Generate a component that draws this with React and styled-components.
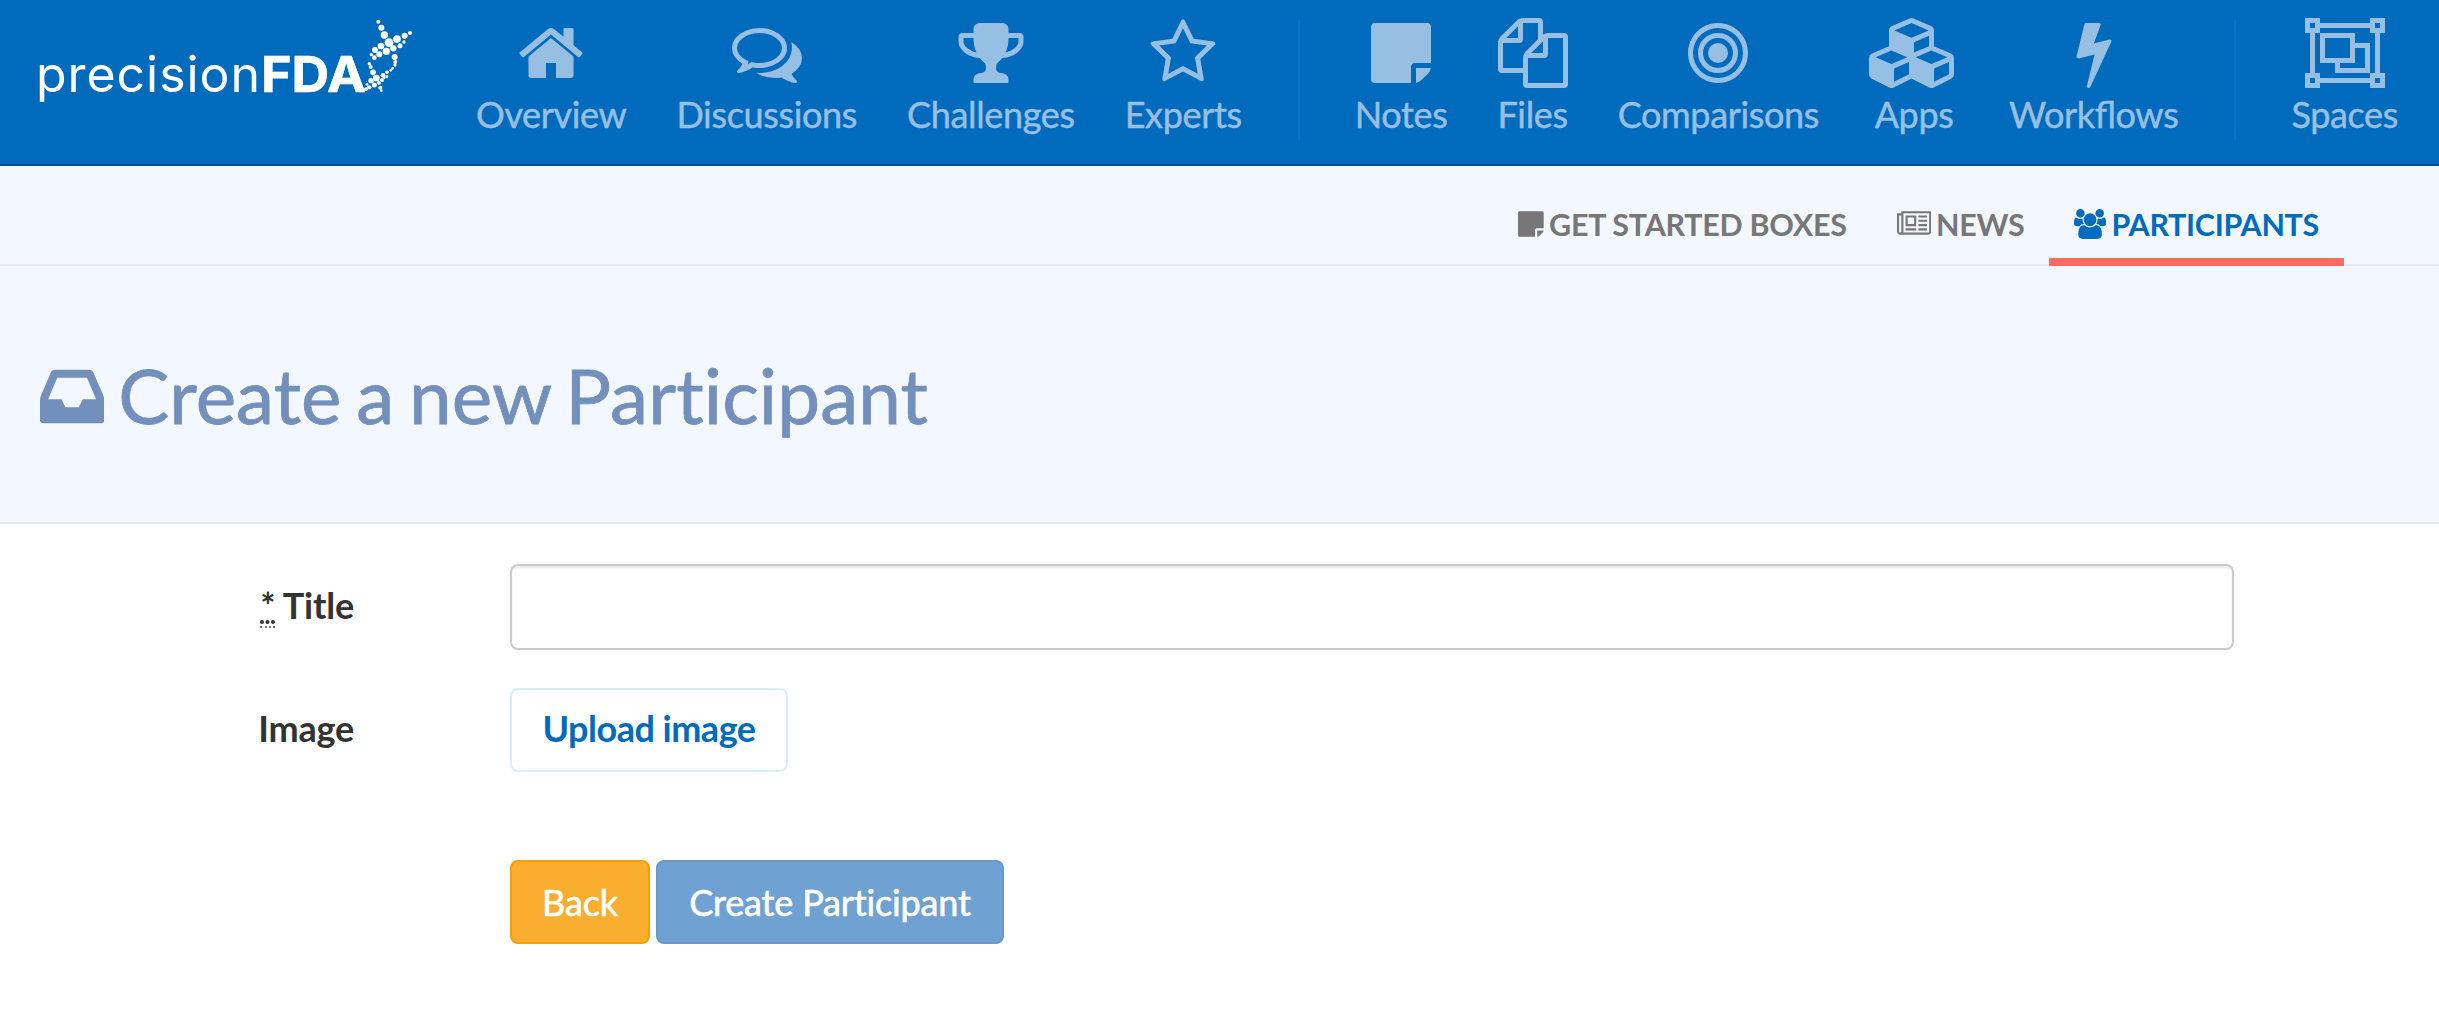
import React from "react";
import styled, { createGlobalStyle } from "styled-components";

const GlobalStyle = createGlobalStyle`
  *, *::before, *::after { box-sizing: border-box; }
  body {
    margin: 0;
    background: #fff;
    color: #333;
    font-family: Lato, "Liberation Sans", sans-serif;
    font-size: 35px;
  }
`;

const Header = styled.header`
  display: flex;
  height: 166px;
  padding-left: 38px;
  background: #006bbc;
  border-bottom: 2px solid #00508c;
`;

const Logo = styled.a`
  flex: none;
  width: 413px;
  height: 120px;
`;

const LogoSvg = styled.svg`
  display: block;
  width: 380px;
  height: 120px;
  fill: #fff;
  overflow: visible;
`;

const LogoLight = styled.text`
  font-family: Inter, sans-serif;
  font-size: 50px;
  font-weight: 400;
`;

const LogoBold = styled.text`
  font-family: Inter, sans-serif;
  font-size: 50px;
  font-weight: 700;
  stroke: #fff;
  stroke-width: 0.6px;
`;

const MainNav = styled.nav`
  display: flex;
`;

const MainLink = styled.a`
  display: flex;
  flex-direction: column;
  align-items: center;
  padding: 18px 25px 0;
  color: #97bfe3;
  font-size: 36px;
  letter-spacing: -0.35px;
  font-feature-settings: "liga" 1;
  -webkit-text-stroke: 0.5px currentColor;
  line-height: 52px;
  white-space: nowrap;
`;

const NavDivider = styled.span`
  width: 2px;
  height: 120px;
  margin: 20px 30px 0 31px;
  background: #0077d2;
`;

const Glyph = styled.svg`
  display: block;
  flex: none;
  width: ${(p) => (p.$size * p.$units) / 1792}px;
  height: ${(p) => p.$size}px;
  fill: currentColor;
`;

const SubNav = styled.nav`
  display: flex;
  justify-content: flex-end;
  height: 100px;
  padding-right: 95px;
  background: #f3f7ff;
  box-shadow: inset 0 -2px 0 #e1ebfa;
`;

const SubLink = styled.a`
  display: flex;
  align-items: center;
  gap: 5px;
  padding: 23px 25px 0;
  border-bottom: 8px solid ${(p) => (p.$active ? "#fb6b63" : "transparent")};
  color: ${(p) => (p.$active ? "#006bbc" : "#777")};
  font-size: 30.5px;
  font-weight: 700;
  letter-spacing: -0.3px;
  line-height: 42px;
  white-space: nowrap;
`;

const TitleBand = styled.section`
  display: flex;
  align-items: flex-start;
  gap: 14px;
  height: 258px;
  padding: 93px 40px 0;
  background: #f3f7ff;
  border-bottom: 2px solid #e1ebfa;
  color: #738fbc;
`;

const PageTitle = styled.h1`
  margin: -10.5px 0 0;
  font-size: 76.5px;
  font-weight: 400;
  line-height: 90px;
  letter-spacing: 0.1px;
  word-spacing: -5px;
  font-variant-ligatures: none;
  -webkit-text-stroke: 0.8px currentColor;
`;

const Form = styled.form`
  display: flex;
  flex-direction: column;
  padding: 40px 205px 0 0;
`;

const Row = styled.div`
  display: grid;
  grid-template-columns: 354px 1fr;
  column-gap: 156px;
  align-items: center;
  margin-bottom: ${(p) => p.$gap}px;
`;

const Label = styled.label`
  padding-bottom: 4px;
  text-align: right;
  font-size: 36px;
  font-weight: 700;
  letter-spacing: -0.2px;
  line-height: 50px;
`;

const Required = styled.abbr`
  display: inline-block;
  line-height: 42px;
  border-bottom: 2px dotted #777;
  text-decoration: underline dotted 4px;
  text-underline-offset: 1px;
`;

const TextInput = styled.input`
  width: 100%;
  height: 86px;
  padding: 12px 24px;
  border: 2px solid #ccc;
  border-radius: 8px;
  background: #fff;
  box-shadow: inset 0 2px 2px rgba(0, 0, 0, 0.075);
  font: inherit;
`;

const Actions = styled.div`
  display: flex;
  gap: 6px;
  grid-column: 2;
`;

const tones = {
  outline: { bg: "#fff", line: "#d6edfe", text: "#006bbc", weight: 700, stroke: 0, drop: 4 },
  warning: { bg: "#f9ae2f", line: "#fa9f00", text: "#fff", weight: 400, stroke: 0.6, drop: 0 },
  primary: { bg: "#6fa2d3", line: "#6899c8", text: "#fff", weight: 400, stroke: 0.6, drop: 0 },
};

const Button = styled.button`
  height: 84px;
  width: ${(p) => p.$width}px;
  padding: 0 0 ${(p) => tones[p.$tone].drop}px;
  border: 2px solid ${(p) => tones[p.$tone].line};
  border-radius: 8px;
  background: ${(p) => tones[p.$tone].bg};
  color: ${(p) => tones[p.$tone].text};
  font-family: inherit;
  font-size: 36px;
  font-weight: ${(p) => tones[p.$tone].weight};
  letter-spacing: ${(p) => (p.$tone === "outline" ? -0.5 : -0.15)}px;
  line-height: 50px;
  font-variant-ligatures: none;
  -webkit-text-stroke: ${(p) => tones[p.$tone].stroke}px currentColor;
  white-space: nowrap;
`;

const ICONS = {
  home: [1792, "M1472 992v480q0 26-19 45t-45 19h-384v-384h-256v384h-384q-26 0-45-19t-19-45v-480q0-1 .5-3t.5-3l575-474 575 474q1 2 1 6zm223-69l-62 74q-8 9-21 11h-3q-13 0-21-7l-692-577-692 577q-12 8-24 7-13-2-21-11l-62-74q-8-10-7-23.5t11-21.5l719-599q32-26 76-26t76 26l244 204v-195q0-14 9-23t23-9h192q14 0 23 9t9 23v408l219 182q10 8 11 21.5t-7 23.5z"],
  comments: [1792, "M704 384q-153 0-286 52t-211.5 141-78.5 191q0 82 53 158t149 132l97 56-35 84q34-20 62-39l44-31 53 10q78 14 153 14 153 0 286-52t211.5-141 78.5-191-78.5-191-211.5-141-286-52zm0-128q191 0 353.5 68.5t256.5 186.5 94 257-94 257-256.5 186.5-353.5 68.5q-86 0-176-16-124 88-278 128-36 9-86 16h-3q-11 0-20.5-8t-11.5-21q-1-3-1-6.5t.5-6.5 2-6l2.5-5 3.5-5.5 4-5 4.5-5 4-4.5q5-6 23-25t26-29.5 22.5-29 25-38.5 20.5-44q-124-72-195-177t-71-224q0-139 94-257t256.5-186.5 353.5-68.5zm822 1169q10 24 20.5 44t25 38.5 22.5 29 26 29.5 23 25q1 1 4 4.5t4.5 5 4 5 3.5 5.5l2.5 5 2 6 .5 6.5-1 6.5q-3 14-13 22t-22 7q-50-7-86-16-154-40-278-128-90 16-176 16-271 0-472-132 58 4 88 4 161 0 309-45t264-129q125-92 192-212t67-254q0-77-23-152 129 71 204 178t75 230q0 120-71 224.5t-195 176.5z"],
  trophy: [1792, "M522 883q-74-162-74-371h-256v96q0 78 94.5 162t235.5 113zm1078-275v-96h-256q0 209-74 371 141-29 235.5-113t94.5-162zm128-128v128q0 71-41.5 143t-112 130-173 97.5-215.5 44.5q-42 54-95 95-38 34-52.5 72.5t-14.5 89.5q0 54 30.5 91t97.5 37q75 0 133.5 45.5t58.5 114.5v64q0 14-9 23t-23 9h-832q-14 0-23-9t-9-23v-64q0-69 58.5-114.5t133.5-45.5q67 0 97.5-37t30.5-91q0-51-14.5-89.5t-52.5-72.5q-53-41-95-95-113-5-215.5-44.5t-173-97.5-112-130-41.5-143v-128q0-40 28-68t68-28h288v-96q0-66 47-113t113-47h576q66 0 113 47t47 113v96h288q40 0 68 28t28 68z"],
  star: [1792, "M1201 1004l306-297-422-62-189-382-189 382-422 62 306 297-73 421 378-199 377 199zm527-357q0 22-26 48l-363 354 86 500q1 7 1 20 0 50-41 50-19 0-40-12l-449-236-449 236q-22 12-40 12-21 0-31.5-14.5t-10.5-35.5q0-6 2-20l86-500-364-354q-25-27-25-48 0-37 56-46l502-73 225-455q19-41 49-41t49 41l225 455 502 73q56 9 56 46z"],
  note: [1536, "M1024 1248v416h-928q-40 0-68-28t-28-68v-1344q0-40 28-68t68-28h1344q40 0 68 28t28 68v928h-416q-40 0-68 28t-28 68zm128 32h381q-15 82-65 132l-184 184q-50 50-132 65v-381z"],
  files: [1792, "M1696 384q40 0 68 28t28 68v1216q0 40-28 68t-68 28h-960q-40 0-68-28t-28-68v-288h-544q-40 0-68-28t-28-68v-672q0-40 20-88t48-76l408-408q28-28 76-48t88-20h416q40 0 68 28t28 68v328q68-40 128-40h416zm-544 213l-299 299h299v-299zm-640-384l-299 299h299v-299zm196 647l316-316v-416h-384v416q0 40-28 68t-68 28h-416v640h512v-256q0-40 20-88t48-76zm956 804v-1152h-384v416q0 40-28 68t-68 28h-416v640h896z"],
  bullseye: [1792, "M1152 896q0 106-75 181t-181 75-181-75-75-181 75-181 181-75 181 75 75 181zm128 0q0-159-112.5-271.5t-271.5-112.5-271.5 112.5-112.5 271.5 112.5 271.5 271.5 112.5 271.5-112.5 112.5-271.5zm128 0q0 212-150 362t-362 150-362-150-150-362 150-362 362-150 362 150 150 362zm128 0q0-130-51-248.5t-136.5-204-204-136.5-248.5-51-248.5 51-204 136.5-136.5 204-51 248.5 51 248.5 136.5 204 204 136.5 248.5 51 248.5-51 204-136.5 136.5-204 51-248.5zm128 0q0 209-103 385.5t-279.5 279.5-385.5 103-385.5-103-279.5-279.5-103-385.5 103-385.5 279.5-279.5 385.5-103 385.5 103 279.5 279.5 103 385.5z"],
  cubes: [2304, "M640 1632l384-192v-314l-384 164v342zm-64-454l404-173-404-173-404 173zm1088 454l384-192v-314l-384 164v342zm-64-454l404-173-404-173-404 173zm-448-293l384-165v-266l-384 164v267zm-64-379l441-189-441-189-441 189zm1088 518v416q0 36-19 67t-52 47l-448 224q-25 14-57 14t-57-14l-448-224q-4-2-7-4-2 2-7 4l-448 224q-25 14-57 14t-57-14l-448-224q-33-16-52-47t-19-67v-416q0-38 21.5-70t56.5-48l434-186v-400q0-38 21.5-70t56.5-48l448-192q23-10 50-10t50 10l448 192q35 16 56.5 48t21.5 70v400l434 186q36 16 57 48t21 70z"],
  bolt: [1792, "M1333 566q18 20 7 44l-540 1157q-13 25-42 25-4 0-14-2-17-5-25.5-19t-4.5-30l197-808-406 101q-4 1-12 1-18 0-31-11-18-15-13-39l201-825q4-14 16-23t28-9h328q19 0 32 12.5t13 29.5q0 8-5 18l-171 463 396-98q8-2 12-2 19 0 34 15z"],
  group: [2048, "M2048 384h-128v1024h128v384h-384v-128h-1280v128h-384v-384h128v-1024h-128v-384h384v128h1280v-128h384zM1792 128v128h128v-128zM128 128v128h128v-128zM256 1664v-128h-128v128zM1920 1664v-128h-128v128zM1664 1536v-128h128v-1024h-128v-128h-1280v128h-128v1024h128v128zM1280 640h384v768h-896v-256h-384v-768h896zM512 1024h640v-512h-640zM1536 1280v-512h-256v384h-384v128z"],
  news: [2048, "M1024 512h-384v384h384v-384zm128 640v128h-640v-128h640zm0-768v640h-640v-640h640zm640 768v128h-512v-128h512zm0-256v128h-512v-128h512zm0-256v128h-512v-128h512zm0-256v128h-512v-128h512zm-1536 960v-960h-128v960q0 26 19 45t45 19 45-19 19-45zm1664 0v-1088h-1536v1088q0 33-11 64h1483q26 0 45-19t19-45zm128-1216v1216q0 80-56 136t-136 56h-1664q-80 0-136-56t-56-136v-1088h256v-128h1792z"],
  users: [1920, "M593 896q-162 5-265 128h-134q-82 0-138-40.5t-56-118.5q0-353 124-353 6 0 43.5 21t97.5 42.5 119 21.5q67 0 133-23-5 37-5 66 0 139 81 256zm1071 637q0 120-73 189.5t-194 69.5h-874q-121 0-194-69.5t-73-189.5q0-53 3.5-103.5t14-109 26.5-108.5 43-97.5 62-81 85.5-53.5 111.5-20q10 0 43 21.5t73 48 107 48 135 21.5 135-21.5 107-48 73-48 43-21.5q61 0 111.5 20t85.5 53.5 62 81 43 97.5 26.5 108.5 14 109 3.5 103.5zm-1024-1277q0 106-75 181t-181 75-181-75-75-181 75-181 181-75 181 75 75 181zm704 384q0 159-112.5 271.5t-271.5 112.5-271.5-112.5-112.5-271.5 112.5-271.5 271.5-112.5 271.5 112.5 112.5 271.5zm576 225q0 78-56 118.5t-138 40.5h-134q-103-123-265-128 81-117 81-256 0-29-5-66 66 23 133 23 59 0 119-21.5t97.5-42.5 43.5-21q124 0 124 353zm-128-609q0 106-75 181t-181 75-181-75-75-181 75-181 181-75 181 75 75 181z"],
  inbox: [1536, "M1023 960h316q-1-3-2.5-8t-2.5-8l-212-496h-708l-212 496q-1 2-2.5 8t-2.5 8h316l95 192h320zm513 30v482q0 26-19 45t-45 19h-1408q-26 0-45-19t-19-45v-482q0-62 25-123l238-552q10-25 36.5-42t52.5-17h832q26 0 52.5 17t36.5 42l238 552q25 61 25 123z"],
};

function Icon({ name, size }) {
  const [units, path] = ICONS[name];
  return (
    <Glyph $size={size} $units={units} viewBox={`0 0 ${units} 1792`} aria-hidden="true">
      <path d={path} fillRule={name === "group" ? "evenodd" : "nonzero"} />
    </Glyph>
  );
}

// Helix dots beside the wordmark: [cx, cy, r].
const HELIX = [
  [70, 20, 6], [79, 38, 9], [88, 60, 11], [102, 83, 13], [126, 72, 11.5],
  [149, 62, 9], [165, 54, 6], [147, 81, 5], [135, 92, 7.5], [78, 93, 10],
  [60, 105, 9], [94, 109, 11], [115, 100, 9.5], [73, 118, 9], [58, 128, 7],
  [49, 119, 5], [119, 126, 9], [121, 141, 6], [120, 150, 5], [113, 160, 4],
  [107, 166, 4], [43, 146, 5], [47, 156, 6], [54, 172, 8.5], [96, 172, 5.5],
  [84, 181, 7], [64, 189, 10], [48, 197, 8], [81, 195, 6], [88, 188, 4],
  [96, 185, 4], [36, 208, 4], [72, 203, 6], [58, 210, 7.5], [43, 217, 6.5],
  [33, 223, 6], [76, 218, 6], [79, 227, 4],
];

const MAIN_LINKS = [
  ["home", "Overview"],
  ["comments", "Discussions"],
  ["trophy", "Challenges"],
  ["star", "Experts"],
  null,
  ["note", "Notes"],
  ["files", "Files"],
  ["bullseye", "Comparisons"],
  ["cubes", "Apps"],
  ["bolt", "Workflows"],
  null,
  ["group", "Spaces"],
];

const SUB_LINKS = [
  ["note", "GET STARTED BOXES"],
  ["news", "NEWS"],
  ["users", "PARTICIPANTS"],
];

export default function App() {
  return (
    <>
      <GlobalStyle />
      <Header>
        <Logo aria-label="precisionFDA">
          <LogoSvg viewBox="0 0 380 120">
            <LogoLight x="-2" y="92" textLength="224" lengthAdjust="spacing">precision</LogoLight>
            <LogoBold x="223" y="92" textLength="105" lengthAdjust="spacingAndGlyphs">FDA</LogoBold>
            <g transform="translate(317 15) scale(0.33333)">
              {HELIX.map(([cx, cy, r]) => (
                <circle key={`${cx}-${cy}`} cx={cx} cy={cy} r={r} />
              ))}
            </g>
          </LogoSvg>
        </Logo>
        <MainNav>
          {MAIN_LINKS.map((link, i) =>
            link ? (
              <MainLink key={link[1]}>
                <Icon name={link[0]} size={70} />
                {link[1]}
              </MainLink>
            ) : (
              <NavDivider key={i} />
            )
          )}
        </MainNav>
      </Header>
      <SubNav>
        {SUB_LINKS.map(([icon, text]) => (
          <SubLink key={text} $active={icon === "users"}>
            <Icon name={icon} size={30} />
            {text}
          </SubLink>
        ))}
      </SubNav>
      <TitleBand>
        <Icon name="inbox" size={75} />
        <PageTitle>Create a new Participant</PageTitle>
      </TitleBand>
      <Form>
        <Row $gap={38}>
          <Label htmlFor="title">
            <Required>*</Required> Title
          </Label>
          <TextInput id="title" type="text" />
        </Row>
        <Row $gap={88}>
          <Label>Image</Label>
          <Actions>
            <Button type="button" $tone="outline" $width={278}>Upload image</Button>
          </Actions>
        </Row>
        <Row $gap={0}>
          <Actions>
            <Button type="button" $tone="warning" $width={140}>Back</Button>
            <Button type="button" $tone="primary" $width={348}>Create Participant</Button>
          </Actions>
        </Row>
      </Form>
    </>
  );
}
